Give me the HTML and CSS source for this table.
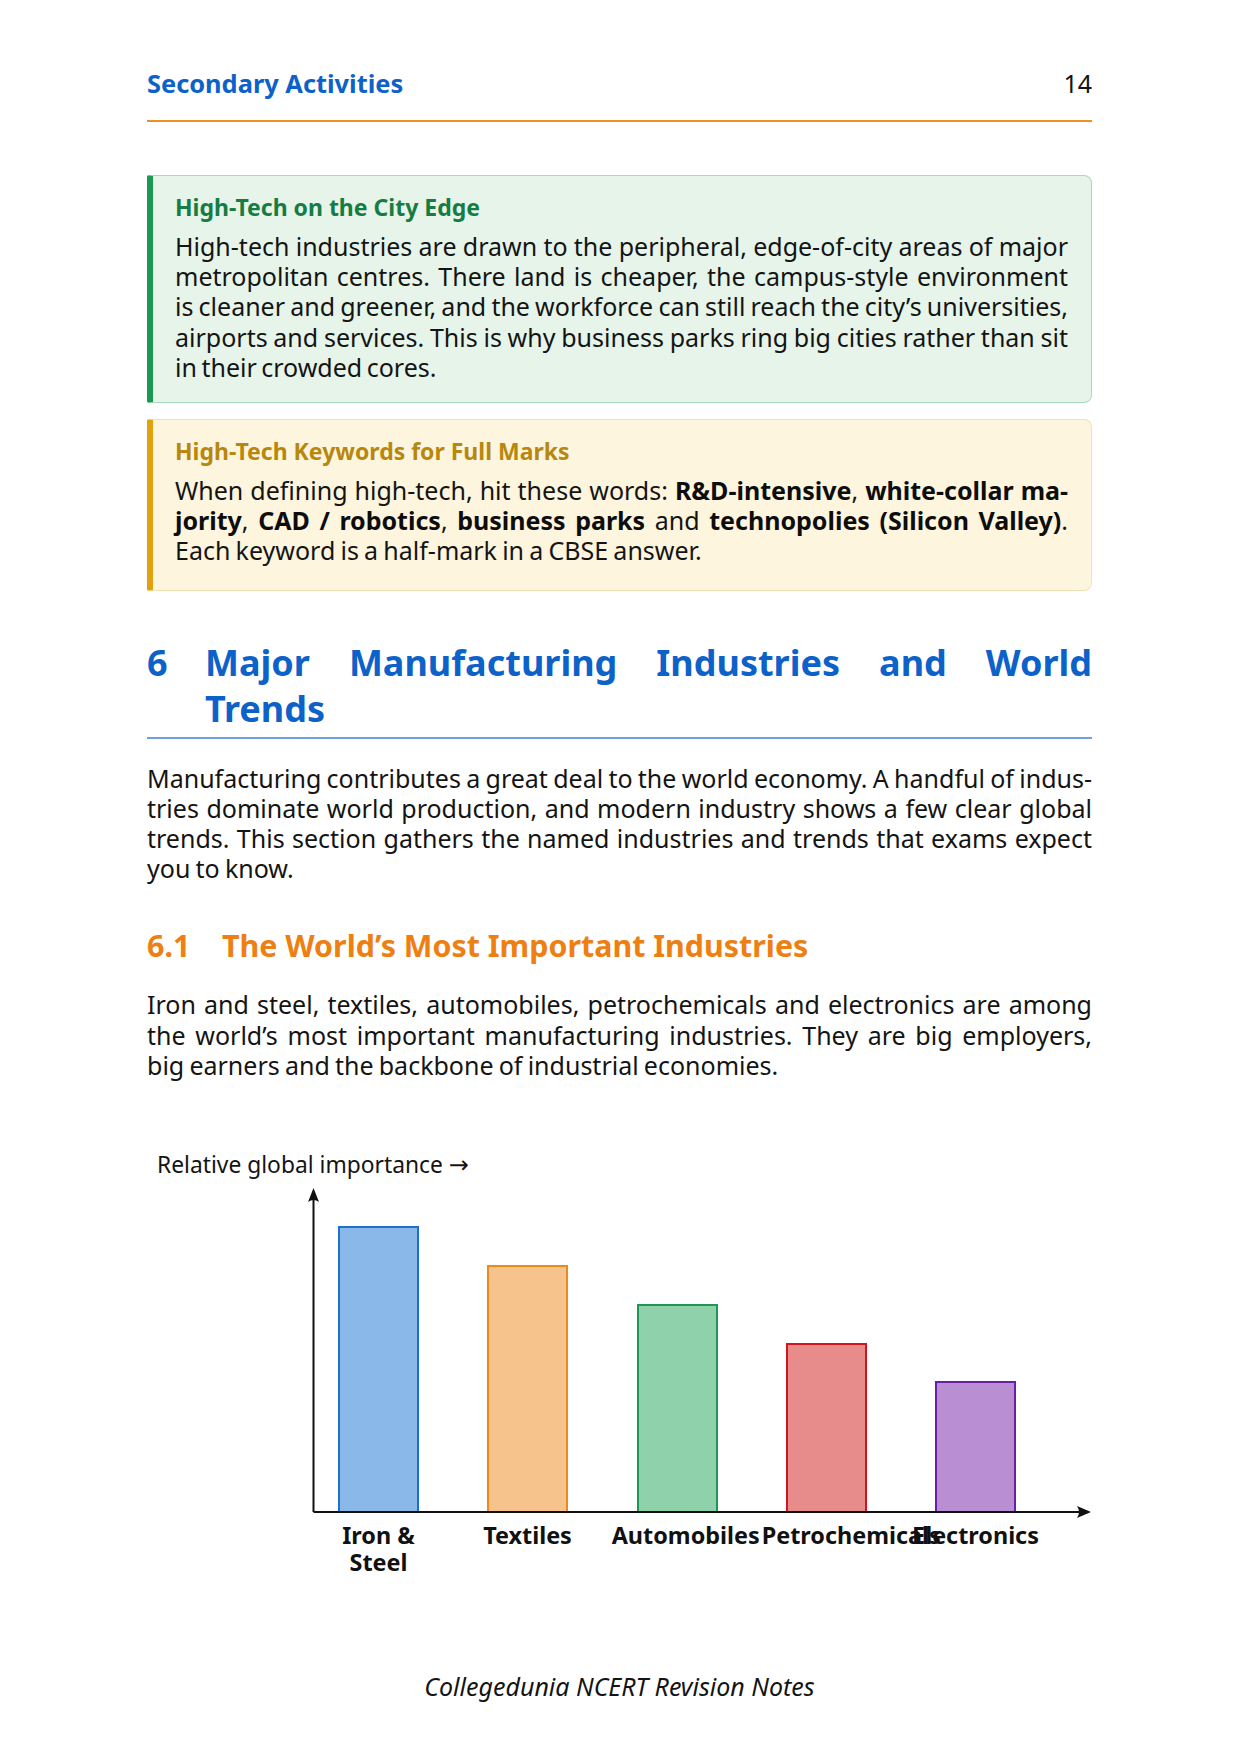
FILE: index.html
```html
<!DOCTYPE html>
<html lang="en">
<head>
<meta charset="utf-8">
<title>Secondary Activities – 14</title>
<link rel="stylesheet" href="styles.css">
</head>
<body>
<div class="page">
  <header class="running-head">
    <span class="running-title">Secondary Activities</span>
    <span class="page-num">14</span>
  </header>

  <section class="callout callout-green">
    <h4 class="callout-title">High-Tech on the City Edge</h4>
    <p class="callout-body">High-tech industries are drawn to the peripheral, edge-of-city areas of major metropolitan centres. There land is cheaper, the campus-style environment <span class="tight">is&nbsp;cleaner and greener, and the workforce can still reach the city’s universities,</span> airports and services. This is why business parks ring big cities rather than sit in their crowded cores.</p>
  </section>

  <section class="callout callout-yellow">
    <h4 class="callout-title">High-Tech Keywords for Full Marks</h4>
    <p class="callout-body">When defining high-tech, hit these words: <b>R&amp;D-intensive</b>, <b>white-collar ma&shy;jority</b>, <b>CAD / robotics</b>, <b>business parks</b> and <b>technopolies (Silicon Valley)</b>. Each keyword is a half-mark in a CBSE answer.</p>
  </section>

  <h2 class="section-heading">
    <span class="sec-num">6</span>
    <span class="sec-text">
      <span class="sec-line sec-line-full">Major Manufacturing Industries and World</span>
      <span class="sec-line">Trends</span>
    </span>
  </h2>

  <p class="para">Manufacturing contributes a great deal to the world economy. A handful of indus&shy;tries dominate world production, and modern industry shows a few clear global trends. This section gathers the named industries and trends that exams expect you to know.</p>

  <h3 class="subsection-heading"><span class="sub-num">6.1</span><span class="sub-text">The World’s Most Important Industries</span></h3>

  <p class="para">Iron and steel, textiles, automobiles, petrochemicals and electronics are among the world’s most important manufacturing industries. They are big employers, big&nbsp;earners and the backbone of industrial economies.</p>

  <figure class="chart">
    <svg class="chart-svg" width="945" height="500" viewBox="0 0 945 500" xmlns="http://www.w3.org/2000/svg">
      <text class="axis-title" x="10" y="52">Relative global importance <tspan class="arrow">→</tspan></text>

      <rect class="bar bar-blue" x="192" y="106" width="79" height="285"/>
      <rect class="bar bar-orange" x="341" y="145" width="79" height="246"/>
      <rect class="bar bar-green" x="491" y="184" width="79" height="207"/>
      <rect class="bar bar-red" x="640" y="223" width="79" height="168"/>
      <rect class="bar bar-purple" x="789" y="261" width="79" height="130"/>

      <line class="axis" x1="166.5" y1="391" x2="166.5" y2="72"/>
      <path class="arrowhead" d="M166.5 67 L172 81 Q166.5 77 161 81 Z"/>
      <line class="axis" x1="166.5" y1="391" x2="936" y2="391"/>
      <path class="arrowhead" d="M944 391 L930 385 Q934 391 930 397 Z"/>

      <text class="bar-label" x="231.5" y="423">Iron &amp;</text>
      <text class="bar-label" x="231.5" y="450">Steel</text>
      <text class="bar-label" x="380.5" y="423">Textiles</text>
      <text class="bar-label bar-label-left" x="464.7" y="423">Automobiles</text>
      <text class="bar-label bar-label-left" x="614.7" y="423">Petrochemicals</text>
      <text class="bar-label" x="828.5" y="423">Electronics</text>
    </svg>
  </figure>

  <footer class="page-foot">Collegedunia NCERT Revision Notes</footer>
</div>
</body>
</html>
```

FILE: styles.css
```css
* {
  box-sizing: border-box;
}

html, body {
  margin: 0;
  padding: 0;
  background: #ffffff;
}

body {
  font-family: "Noto Sans", "Open Sans", "DejaVu Sans", sans-serif;
  color: #141414;
  font-size: 25px;
  line-height: 30.2px;
}

.page {
  width: 1240px;
  min-height: 1754px;
  padding: 68px 148px 54px 147px;
  display: flex;
  flex-direction: column;
}

/* Running head */
.running-head {
  display: flex;
  justify-content: space-between;
  align-items: baseline;
  line-height: 30px;
  padding-bottom: 22px;
  border-bottom: 2px solid #ee8f2a;
}

.running-title {
  font-weight: 700;
  font-size: 25.4px;
  color: #0d62c9;
}

.page-num {
  color: #141414;
}

/* Callout boxes */
.callout {
  border: 1px solid;
  border-left-width: 6px;
  border-radius: 2px 8px 8px 2px;
  padding: 17px 23px 20px 22px;
}

.callout-green {
  margin-top: 53px;
  background: #e6f4ea;
  border-color: #a6d9c1;
  border-left-color: #1a9a50;
}

.callout-yellow {
  margin-top: 16px;
  padding-bottom: 24px;
  background: #fdf5dd;
  border-color: #f1e2b6;
  border-left-color: #e3a20c;
}

.callout-title {
  margin: 0 0 10px;
  font-size: 23px;
  line-height: 28px;
  font-weight: 700;
}

.callout-green .callout-title {
  color: #157c42;
}

.callout-yellow .callout-title {
  color: #b8870d;
}

.callout-body {
  margin: 0;
  text-align: justify;
  hyphens: manual;
  word-spacing: -1.3px;
}

.callout-green .callout-body {
  word-spacing: -2px;
}

.callout-body .tight {
  word-spacing: -4px;
}

.callout-body b {
  font-weight: 700;
  color: #0d0d0d;
}

/* Section heading */
.section-heading {
  margin: 49px 0 0;
  display: flex;
  font-size: 36px;
  line-height: 46px;
  font-weight: 700;
  color: #0d62c9;
  padding-bottom: 5px;
  border-bottom: 2px solid #6e9fe0;
}

.sec-num {
  flex: 0 0 58px;
}

.sec-text {
  flex: 1;
  display: flex;
  flex-direction: column;
}

.sec-line {
  display: block;
}

.sec-line-full {
  text-align: justify;
  text-align-last: justify;
}

/* Paragraphs */
.para {
  margin: 24px 0 0;
  text-align: justify;
  hyphens: manual;
  word-spacing: -1.3px;
}

/* Subsection heading */
.subsection-heading {
  margin: 45px 0 0;
  display: flex;
  font-size: 30.4px;
  line-height: 36px;
  font-weight: 700;
  color: #ee7f12;
}

.sub-num {
  flex: 0 0 75px;
}

.subsection-heading + .para {
  margin-top: 25px;
}

/* Chart */
.chart {
  margin: 41px 0 0;
}

.chart-svg {
  display: block;
  overflow: visible;
}

.axis-title {
  font-family: "Noto Sans", sans-serif;
  font-size: 22.8px;
  fill: #141414;
}

.axis-title .arrow {
  font-family: "DejaVu Sans", sans-serif;
  font-size: 24px;
}

.bar {
  stroke-width: 2;
}

.bar-blue { fill: #8ab9e9; stroke: #1f6fd1; }
.bar-orange { fill: #f7c38c; stroke: #ec8a1b; }
.bar-green { fill: #8fd1ab; stroke: #1e9656; }
.bar-red { fill: #e88b8b; stroke: #cf1620; }
.bar-purple { fill: #b98ed2; stroke: #6b1fa4; }

.axis {
  stroke: #111111;
  stroke-width: 2;
}

.arrowhead {
  fill: #111111;
}

.bar-label {
  font-family: "Noto Sans", sans-serif;
  font-size: 23.4px;
  font-weight: 700;
  fill: #111111;
  text-anchor: middle;
}

.bar-label-left {
  text-anchor: start;
}

/* Footer */
.page-foot {
  margin-top: auto;
  text-align: center;
  font-size: 25px;
  line-height: 28px;
  font-style: italic;
  color: #141414;
}
```
